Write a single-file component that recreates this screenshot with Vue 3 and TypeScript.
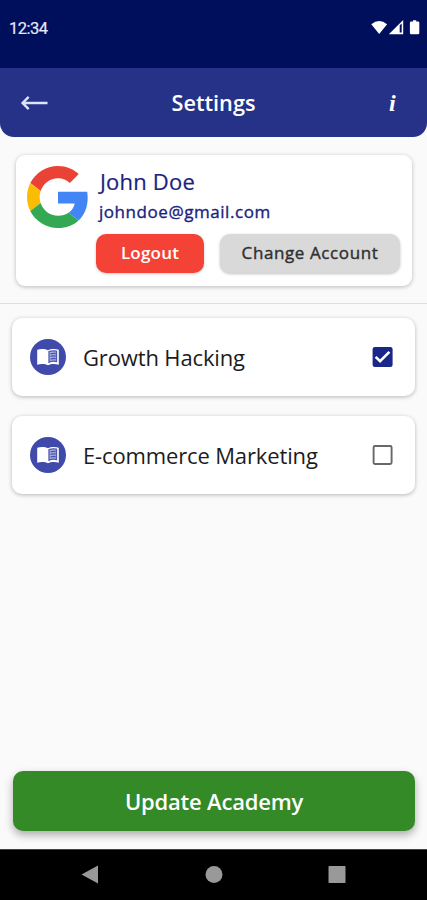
<script setup lang="ts">
import { ref } from 'vue'

interface Academy {
  id: number
  name: string
  selected: boolean
}

const academies = ref<Academy[]>([
  { id: 1, name: 'Growth Hacking', selected: true },
  { id: 2, name: 'E-commerce Marketing', selected: false },
])
</script>

<template>
  <div class="screen">
    <div class="status">
      <span class="clock">12:34</span>
      <svg class="indicators" width="50" height="16" viewBox="0 0 50 16" fill="#fff">
        <path d="M1.300 4.200Q9.200 -2.200 17.100 4.200L9.200 14Z" />
        <path fill-rule="evenodd" d="M18.800 14.200L33.200 0V14.200ZM29.700 5.300V12.600H31.700V3.500Z" />
        <path d="M43 0.200h3.200v1.300h1.800q1.300 0 1.300 1.300v10.100q0 1.300-1.300 1.300h-6.800q-1.300 0-1.300-1.300V2.800q0-1.300 1.300-1.300h1.800z" />
      </svg>
    </div>

    <header class="header">
      <svg class="back" width="28" height="16" viewBox="0 0 28 16" fill="none" stroke="#dfe2fb" stroke-width="2.400">
        <path d="M2.400 8H27.500M8.700 1.900L2.600 8L8.700 14.100" />
      </svg>
      <h1 class="title">Settings</h1>
      <span class="info">i</span>
    </header>

    <main class="content">
      <section class="account">
        <svg class="google" width="62" height="62" viewBox="0 0 48 48">
          <path fill="#ea4335" d="M24 9.500c3.540 0 6.710 1.220 9.210 3.600l6.850-6.850C35.900 2.380 30.470 0 24 0 14.620 0 6.510 5.380 2.560 13.220l7.980 6.190C12.430 13.720 17.740 9.500 24 9.500z" />
          <path fill="#4285f4" d="M46.980 24.550c0-1.570-.15-3.090-.38-4.550H24v9.020h12.940c-.58 2.960-2.260 5.480-4.780 7.180l7.730 6c4.510-4.180 7.090-10.360 7.090-17.650z" />
          <path fill="#fbbc05" d="M10.530 28.590c-.48-1.450-.76-2.990-.76-4.590s.27-3.140.76-4.590l-7.980-6.190C.92 16.460 0 20.120 0 24c0 3.880.92 7.540 2.560 10.780l7.970-6.190z" />
          <path fill="#34a853" d="M24 48c6.480 0 11.930-2.130 15.890-5.810l-7.730-6c-2.150 1.450-4.920 2.300-8.160 2.300-6.260 0-11.570-4.220-13.470-9.910l-7.980 6.190C6.510 42.620 14.620 48 24 48z" />
        </svg>
        <div class="profile">
          <div class="name">John Doe</div>
          <div class="email">johndoe@gmail.com</div>
          <div class="actions">
            <button class="btn logout"><span>Logout</span></button>
            <button class="btn change"><span>Change Account</span></button>
          </div>
        </div>
      </section>

      <section class="list">
        <label v-for="academy in academies" :key="academy.id" class="academy">
          <svg class="book" width="36" height="36" viewBox="0 0 36 36">
            <circle cx="18" cy="18" r="18" fill="#3f4aaa" />
            <path fill="#fff" d="M18 11.300C15.500 9.700 10.500 9.500 7.200 10.800V25.700C10.500 24.500 15.500 24.700 18 26.300C20.500 24.700 25.500 24.500 28.800 25.700V10.800C25.500 9.500 20.500 9.700 18 11.300Z" />
            <path fill="#aab0dc" stroke="#5059b2" stroke-width="1.300" d="M19 12.600V23.200Q22.500 21.700 26.500 22.500V12.200Q22.500 11.300 19 12.600Z" />
            <path fill="none" stroke="#4a54ae" stroke-width="1.300" d="M20.500 14.800Q23 14 25.700 14.500M20.500 17.400Q23 16.600 25.700 17.100M20.500 20Q23 19.200 25.700 19.700" />
          </svg>
          <span class="academy-name">{{ academy.name }}</span>
          <input v-model="academy.selected" class="native" type="checkbox" />
          <svg class="check" width="21" height="20" viewBox="0 0 21 20" fill="none">
            <template v-if="academy.selected">
              <rect x="0.600" width="20" height="20" rx="2.200" fill="#1a2789" />
              <path d="M3.600 9.900L8.100 14.200L17.400 4.800" stroke="#fff" stroke-width="2.600" />
            </template>
            <rect v-else x="1.600" y="1" width="18" height="18" rx="1.400" stroke="#686868" stroke-width="1.900" />
          </svg>
        </label>
      </section>

      <button class="update"><span>Update Academy</span></button>
    </main>

    <nav class="nav">
      <svg width="18" height="20" viewBox="0 0 18 20" fill="#999"><path d="M0.500 9.500L17 0.500V18.500Z" /></svg>
      <svg width="18" height="18" viewBox="0 0 18 18" fill="#999"><circle cx="9" cy="8.500" r="8.500" /></svg>
      <svg width="18" height="18" viewBox="0 0 18 18" fill="#999"><rect x="0.500" width="17" height="17" rx="0.800" /></svg>
    </nav>
  </div>
</template>

<style>
body {
  margin: 0;
}
</style>

<style scoped>
.screen {
  display: flex;
  flex-direction: column;
  height: 900px;
  background: #fafafa;
  font-family: 'Open Sans', sans-serif;
  overflow: hidden;
}

.status {
  box-sizing: border-box;
  flex: none;
  display: flex;
  justify-content: space-between;
  height: 68px;
  padding: 19px 7px 0 9px;
  background: #000f5c;
  color: #e4e7f8;
}

.clock {
  font: 400 16.5px/20px Roboto, sans-serif;
  letter-spacing: -0.5px;
  -webkit-text-stroke: 0.2px;
}

.indicators {
  margin-top: 1px;
}

.header {
  box-sizing: border-box;
  flex: none;
  display: grid;
  grid-template-columns: 60px 1fr 60px;
  align-items: center;
  height: 69px;
  border-radius: 0 0 14px 14px;
  background: #263288;
  color: #fff;
}

.back {
  margin-left: 20px;
}

.title {
  margin: 0;
  text-align: center;
  font-size: 21.7px;
  font-weight: 600;
  line-height: 30px;
}

.info {
  padding-left: 22px;
  font: italic 700 24px/30px 'Liberation Serif', serif;
}

.content {
  flex: 1;
  display: flex;
  flex-direction: column;
  min-height: 0;
}

.account {
  box-sizing: border-box;
  flex: none;
  display: flex;
  gap: 7px;
  height: 131px;
  margin: 18px 15px 17px 16px;
  padding: 11px 0 0 11px;
  border-radius: 9px;
  background: #fff;
  box-shadow: 0 1px 4px rgba(0, 0, 0, 0.26);
}

.google {
  flex: none;
}

.profile {
  color: #1a237e;
  white-space: nowrap;
}

.name {
  padding-left: 4px;
  font-size: 22px;
  line-height: 31px;
  letter-spacing: 0.2px;
  -webkit-text-stroke: 0.2px;
}

.email {
  padding-left: 3px;
  font-size: 17px;
  line-height: 30px;
  letter-spacing: 0.55px;
  -webkit-text-stroke: 0.35px;
}

.actions {
  display: flex;
  gap: 16px;
  padding-top: 7px;
}

.btn {
  height: 39px;
  padding: 0;
  border: 0;
  border-radius: 10px;
  font: 600 17px/38px 'Open Sans', sans-serif;
  white-space: nowrap;
}

.logout {
  width: 108px;
  background: #f44336;
  color: #fff;
  letter-spacing: 0.2px;
  box-shadow: 0 1px 3px rgba(0, 0, 0, 0.2);
}

.change {
  width: 180px;
  background: #d9d9d9;
  color: #303030;
  font-weight: 400;
  letter-spacing: 0.6px;
  -webkit-text-stroke: 0.4px;
  box-shadow: 0 1px 3px rgba(0, 0, 0, 0.25);
}

.btn span {
  display: block;
  margin-top: -1px;
}

.list {
  display: grid;
  gap: 20px;
  padding: 14px 12px 0;
  border-top: 1px solid #dedede;
}

.academy {
  box-sizing: border-box;
  display: flex;
  align-items: center;
  height: 78px;
  padding: 0 22px 0 18px;
  border-radius: 10px;
  background: #fff;
  box-shadow: 0 1px 4px rgba(0, 0, 0, 0.27);
}

.academy-name {
  flex: 1;
  padding-left: 17px;
  color: #1c1c1c;
  font-size: 22px;
  line-height: 32px;
  letter-spacing: -0.14px;
  white-space: nowrap;
}

.native {
  position: absolute;
  opacity: 0;
  pointer-events: none;
}

.update {
  height: 60px;
  margin: auto 12px 18px 13px;
  padding: 0;
  border: 0;
  border-radius: 10px;
  background: #338a27;
  color: #fff;
  font: 600 22px/60px 'Open Sans', sans-serif;
  letter-spacing: -0.2px;
  box-shadow: 0 4px 8px rgba(0, 0, 0, 0.32);
}

.nav {
  box-sizing: border-box;
  flex: none;
  display: flex;
  align-items: center;
  justify-content: space-between;
  height: 51px;
  padding: 0 81px;
  border-top: 1px solid #444;
  background: #000;
}
</style>
